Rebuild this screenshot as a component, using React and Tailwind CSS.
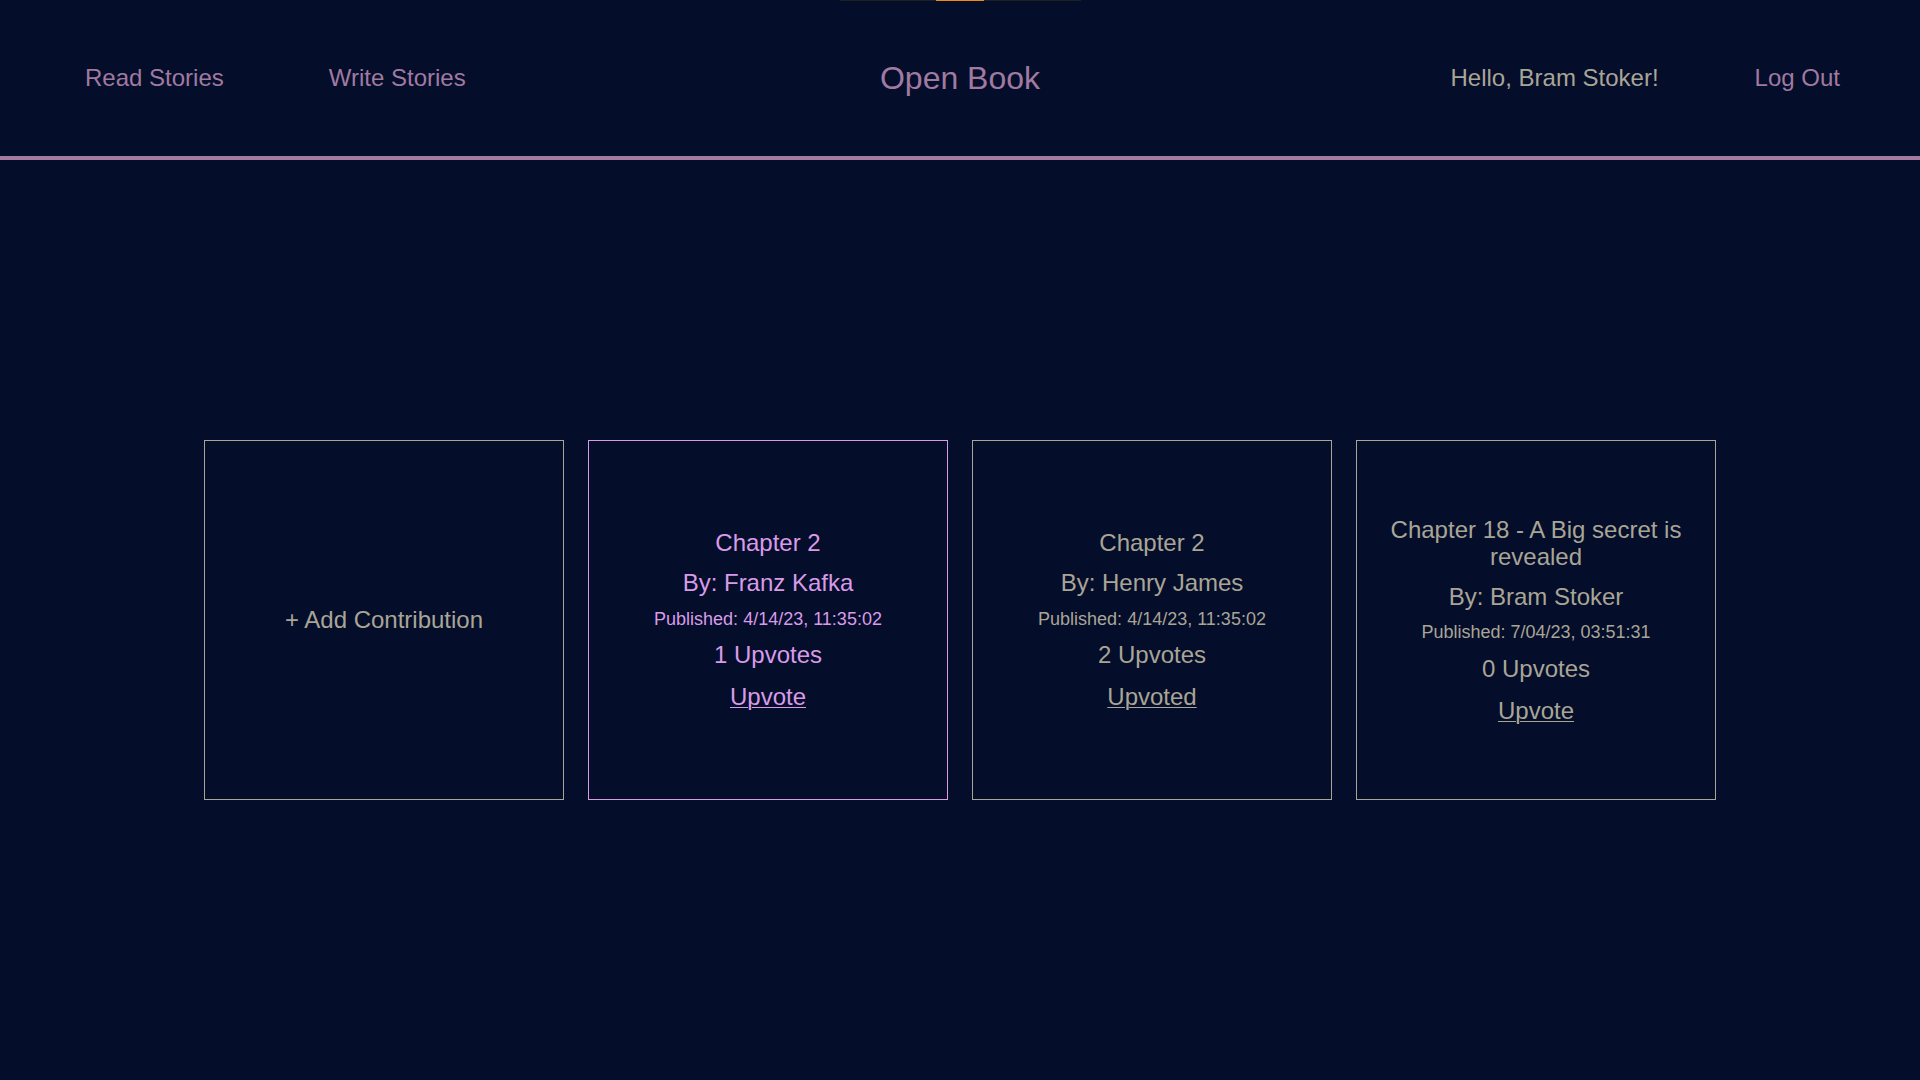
const chapters = [
  { id: 1, title: 'Chapter 2', author: 'Franz Kafka', published: '4/14/23, 11:35:02', upvotes: 1, voted: false, active: true },
  { id: 2, title: 'Chapter 2', author: 'Henry James', published: '4/14/23, 11:35:02', upvotes: 2, voted: true },
  { id: 3, title: 'Chapter 18 - A Big secret is revealed', author: 'Bram Stoker', published: '7/04/23, 03:51:31', upvotes: 0, voted: false },
];

function ChapterCard({ chapter }) {
  const tone = chapter.active
    ? 'border-[#d89be8] text-[#d89be8]'
    : 'border-[#a9a596] text-[#a9a596]';

  return (
    <div className={`w-[360px] h-[360px] border flex flex-col items-center justify-center text-center px-6 ${tone}`}>
      <p className="text-[24px] leading-[1.15]">{chapter.title}</p>
      <p className="text-[24px] leading-[1.15] mt-3">By: {chapter.author}</p>
      <p className="text-[18px] leading-[1.15] mt-3">Published: {chapter.published}</p>
      <p className="text-[24px] leading-[1.15] mt-3">{chapter.upvotes} Upvotes</p>
      <button className="text-[24px] leading-[1.15] mt-[14px] underline underline-offset-2 decoration-1 cursor-pointer">
        {chapter.voted ? 'Upvoted' : 'Upvote'}
      </button>
    </div>
  );
}

export default function App() {
  return (
    <div
      className="relative min-h-screen flex flex-col bg-[#040d2a]"
      style={{ fontFamily: '"Liberation Sans", Arial, sans-serif' }}
    >
      {/* thin progress strip at the very top */}
      <div className="absolute top-0 left-[840px] w-[241px] h-px bg-[#1e1f24]">
        <div className="ml-[96px] w-[48px] h-px bg-[#f08a12]" />
      </div>

      {/* Header */}
      <header className="h-[160px] grid grid-cols-3 items-center border-b-4 border-[#a47a9f]">
        <nav className="flex items-center gap-[105px] pl-[85px] text-[24px] text-[#a07aa0]">
          <a href="#">Read Stories</a>
          <a href="#">Write Stories</a>
        </nav>
        <h1 className="text-center text-[32px] text-[#a07aa0]">Open Book</h1>
        <div className="flex items-center justify-end gap-[96px] pr-[80px] text-[24px]">
          <span className="text-[#a9a596]">Hello, Bram Stoker!</span>
          <a href="#" className="text-[#a07aa0]">Log Out</a>
        </div>
      </header>

      {/* Chapters */}
      <main className="flex-1 flex items-center justify-center gap-6">
        <button className="w-[360px] h-[360px] border border-[#a9a596] text-[#a9a596] text-[24px] flex items-center justify-center cursor-pointer">
          + Add Contribution
        </button>
        {chapters.map((chapter) => (
          <ChapterCard key={chapter.id} chapter={chapter} />
        ))}
      </main>
    </div>
  );
}
